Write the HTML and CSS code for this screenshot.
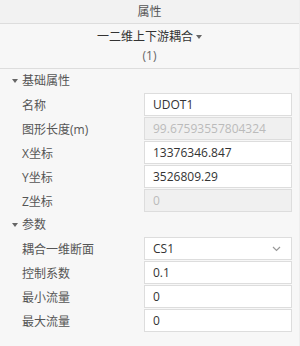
FILE: index.html
```html
<!doctype html>
<html lang="zh">
<head>
    <meta charset="UTF-8">
    <title>属性</title>
    <link rel="stylesheet" href="styles.css">
</head>
<body>
<div class="panel">
    <div class="title">属性</div>
    <div class="type">
        <div class="type-name">一二维上下游耦合 <span class="caret"></span></div>
        <div class="type-count">(1)</div>
    </div>

    <div class="group">
        <div class="group-head"><span class="caret"></span>基础属性</div>
        <div class="row"><label>名称</label><input class="field" value="UDOT1"></div>
        <div class="row"><label>图形长度(m)</label><input class="field" value="99.67593557804324" disabled></div>
        <div class="row"><label>X坐标</label><input class="field" value="13376346.847"></div>
        <div class="row"><label>Y坐标</label><input class="field" value="3526809.29"></div>
        <div class="row"><label>Z坐标</label><input class="field" value="0" disabled></div>
    </div>

    <div class="group">
        <div class="group-head"><span class="caret"></span>参数</div>
        <div class="row"><label>耦合一维断面</label>
            <div class="field select">
                <span>CS1</span>
                <svg width="9" height="6" viewBox="0 0 9 6"><path d="M1 1l3.5 3.5L8 1" fill="none" stroke="#999" stroke-width="1.2"/></svg>
            </div>
        </div>
        <div class="row"><label>控制系数</label><input class="field" value="0.1"></div>
        <div class="row"><label>最小流量</label><input class="field" value="0"></div>
        <div class="row"><label>最大流量</label><input class="field" value="0"></div>
    </div>
</div>
</body>
</html>
```

FILE: styles.css
```css
*{margin: 0;padding: 0;box-sizing: border-box}
html,body{height: 100%;}
body{
    background: #f7f7f7;
    font-family: "Open Sans", "Noto Sans CJK SC", sans-serif;
    font-size: 12px;
    color: #333;
}
.panel{height: 100%;border-right: 1px solid #eee;}
.title{
    height: 24px;
    line-height: 23px;
    text-align: center;
    color: #555;
    background: #f2f2f2;
    border-bottom: 1px solid #ddd;
}
.type{
    height: 45px;
    padding-top: 3px;
    text-align: center;
    border-bottom: 1px solid #ddd;
    line-height: 19px;
}
.type-count{color: #666;}
.caret{
    display: inline-block;
    width: 0;
    height: 0;
    border-left: 3px solid transparent;
    border-right: 3px solid transparent;
    border-top: 4px solid #666;
    vertical-align: middle;
    margin-bottom: 2px;
}
.group-head{
    height: 24px;
    line-height: 24px;
    padding-left: 12px;
    color: #555;
}
.group-head .caret{margin-right: 4px;}
.row{
    display: flex;
    align-items: center;
    height: 24px;
    padding: 0 7px 1px 22px;
}
.row label{flex: 1;color: #555;}
.field{
    width: 148px;
    height: 23px;
    border: 1px solid #ddd;
    background: #fff;
    padding: 0 8px;
    font: inherit;
    color: #333;
    outline: none;
}
.field:disabled{background: #f0f0f0;color: #bbb;}
.select{
    display: flex;
    align-items: center;
    justify-content: space-between;
    padding-right: 10px;
}
```
